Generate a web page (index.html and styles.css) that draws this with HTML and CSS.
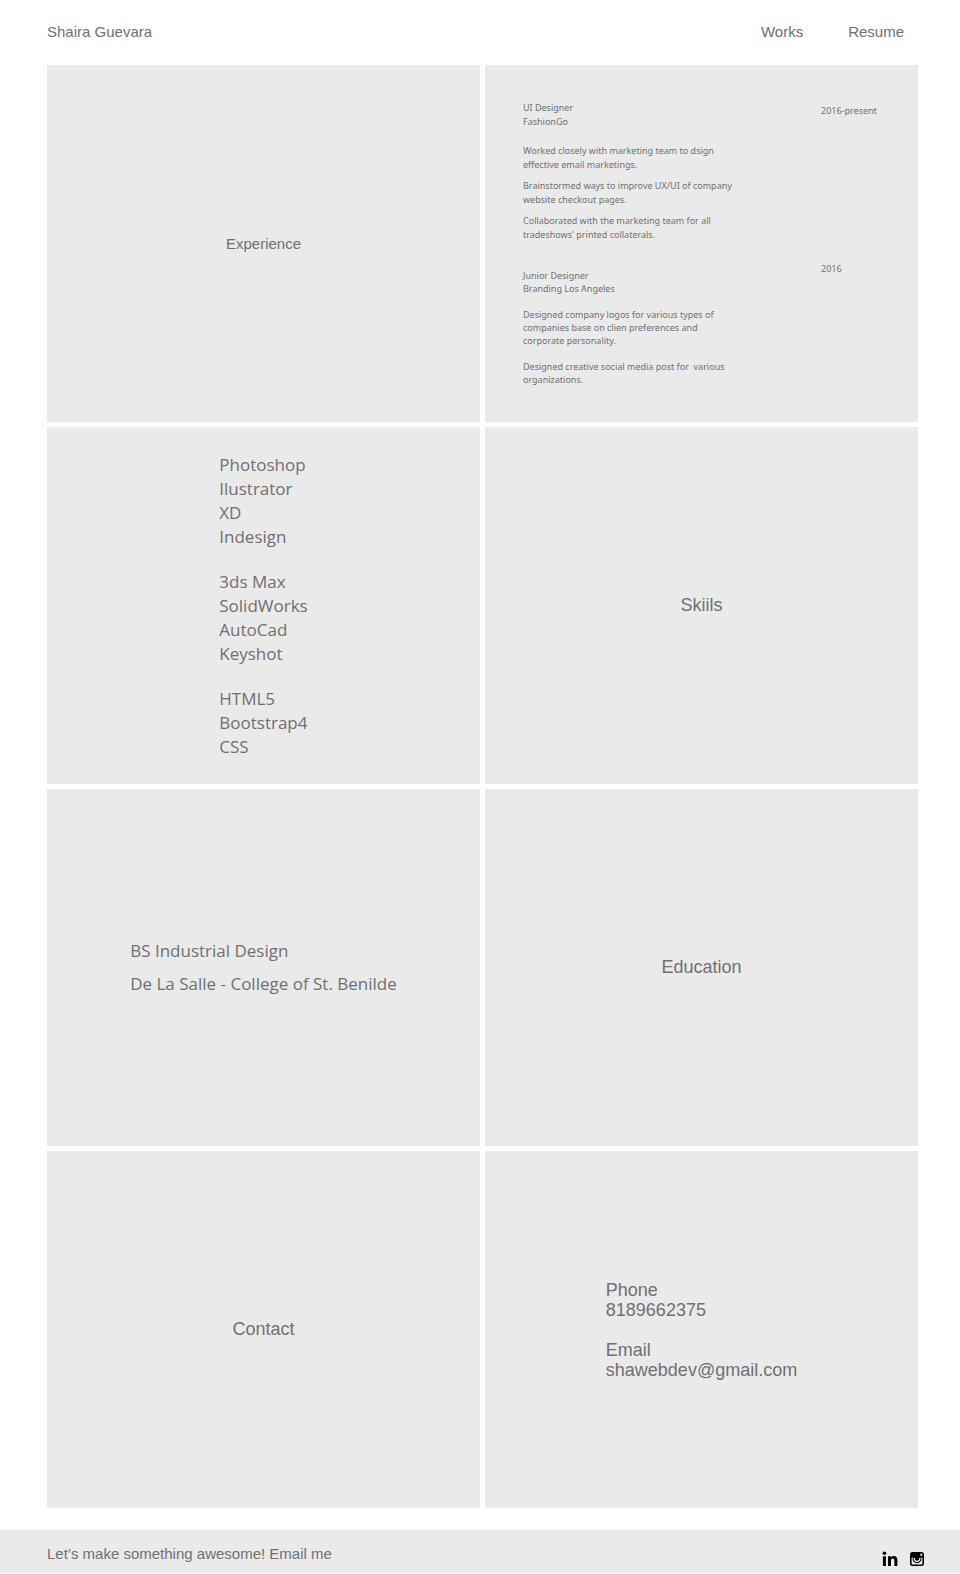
FILE: index.html
```html
<!DOCTYPE html>
<html lang="en">
<head>
<meta charset="utf-8">
<meta name="viewport" content="width=device-width, initial-scale=1">
<title>Shaira Guevara - Resume</title>
<link rel="stylesheet" href="styles.css">
</head>
<body>
<header class="site-header">
  <a class="brand" href="#">Shaira Guevara</a>
  <nav class="site-nav">
    <a href="#works">Works</a>
    <a href="#resume">Resume</a>
  </nav>
</header>
<main class="tiles" id="resume">
  <section class="tile tile-small"><h2>Experience</h2></section>
  <section class="tile jobs">
    <article class="job">
      <div class="job-text">
        <h3>UI Designer<br>FashionGo</h3>
        <p>Worked closely with marketing team to dsign<br>effective email marketings.</p>
        <p>Brainstormed ways to improve UX/UI of company<br>website checkout pages.</p>
        <p>Collaborated with the marketing team for all<br>tradeshows' printed collaterals.</p>
      </div>
      <time class="job-date">2016-present</time>
    </article>
    <article class="job job-early">
      <div class="job-text">
        <h3>Junior Designer<br>Branding Los Angeles</h3>
        <p>Designed company logos for various types of<br>companies base on clien preferences and<br>corporate personality.</p>
        <p>Designed creative social media post for&nbsp; various<br>organizations.</p>
      </div>
      <time class="job-date">2016</time>
    </article>
  </section>
  <section class="tile">
    <div class="skills">
      <ul><li>Photoshop</li><li>Ilustrator</li><li>XD</li><li>Indesign</li></ul>
      <ul><li>3ds Max</li><li>SolidWorks</li><li>AutoCad</li><li>Keyshot</li></ul>
      <ul><li>HTML5</li><li>Bootstrap4</li><li>CSS</li></ul>
    </div>
  </section>
  <section class="tile"><h2>Skiils</h2></section>
  <section class="tile">
    <div class="school"><p>BS Industrial Design</p><p>De La Salle - College of St. Benilde</p></div>
  </section>
  <section class="tile"><h2>Education</h2></section>
  <section class="tile"><h2>Contact</h2></section>
  <section class="tile">
    <dl class="contact">
      <dt>Phone</dt><dd>8189662375</dd>
      <dt>Email</dt><dd><a href="mailto:shawebdev@gmail.com">shawebdev@gmail.com</a></dd>
    </dl>
  </section>
</main>
<footer class="site-footer">
  <a href="mailto:shawebdev@gmail.com">Let’s make something awesome! Email me</a>
  <div class="social">
    <a href="#linkedin" aria-label="LinkedIn">
      <svg width="16" height="16" viewBox="0 0 16 16"><circle cx="2.4" cy="2.2" r="1.8"/><path d="M.9 5.200h3V15h-3zM6 5.200h2.800v1.300C9.400 5.500 10.400 5 11.700 5 14.400 5 15.400 6.700 15.400 9.300V15h-3V9.900c0-1.500-.4-2.400-1.500-2.400-1.300 0-1.900.9-1.900 2.400V15H6z"/></svg>
    </a>
    <a href="#instagram" aria-label="Instagram">
      <svg width="14" height="14" viewBox="0 0 14 14"><path fill-rule="evenodd" d="M2.500 0h9A2.500 2.500 0 0 1 14 2.500v9a2.500 2.500 0 0 1-2.500 2.500h-9A2.500 2.500 0 0 1 0 11.500v-9A2.500 2.500 0 0 1 2.500 0zM10.300 1.800v2h2v-2zM1.600 5.500v5.900q0 1 1 1h8.800q1 0 1-1V5.500h-1.200a4.400 4.400 0 1 1-8.400 0z"/><path fill="none" stroke="#eaeaea" stroke-width="1.400" d="M4.300 6a2.800 2.800 0 1 0 5.400 0"/></svg>
    </a>
  </div>
</footer>
</body>
</html>
```
FILE: styles.css
```css
* { box-sizing: border-box; }
body, h2, h3, p, ul, dl, dd { margin: 0; padding: 0; }
body {
  background: #fff;
  color: #707070;
  font-family: "Liberation Sans", Arial, sans-serif;
  font-size: 15px;
}
a { color: inherit; text-decoration: none; }
h2, h3 { font-size: inherit; font-weight: 400; }
ul { list-style: none; }

.site-header {
  display: flex;
  justify-content: space-between;
  align-items: center;
  height: 65px;
  padding: 0 56px 2px 47px;
}
.site-nav { display: flex; gap: 45px; }

.tiles {
  display: grid;
  grid-template-columns: repeat(2, minmax(0, 1fr));
  grid-auto-rows: minmax(357px, auto);
  gap: 5px;
  padding: 0 42px 0 47px;
}
.tile {
  display: flex;
  justify-content: center;
  align-items: center;
  background: #eaeaea;
  font-size: 18px;
}
.tile-small { font-size: 15px; }

.jobs {
  flex-direction: column;
  justify-content: flex-start;
  align-items: stretch;
  gap: 20px;
  padding: 36px 38px 32px;
  font-family: "Noto Sans", sans-serif;
  font-size: 9px;
}
.job {
  display: flex;
  justify-content: space-between;
  line-height: 14px;
}
.job-text { display: grid; gap: 7px; }
.job-text h3 { margin-bottom: 8px; }
.job-date { width: 59px; padding-top: 3px; }
.job-early .job-text { gap: 13px; padding-top: 7px; line-height: 13px; }
.job-early h3 { margin-bottom: 0; }
.job-early .job-date { padding-top: 0; }

.skills,
.school {
  display: grid;
  font-family: "Open Sans", sans-serif;
  font-size: 17px;
  line-height: 24px;
}
.skills { gap: 21px; }
.school { gap: 9px; }

.contact { line-height: 20px; }
.contact dd + dt { margin-top: 20px; }

.site-footer {
  display: flex;
  justify-content: space-between;
  align-items: center;
  height: 43px;
  margin: 22px 0 1px;
  padding: 4px 36px 0 47px;
  background: #eaeaea;
}
.social { display: flex; align-items: center; gap: 12px; padding-top: 10px; }
.social a { display: flex; }
.social svg { fill: #000; }
```
